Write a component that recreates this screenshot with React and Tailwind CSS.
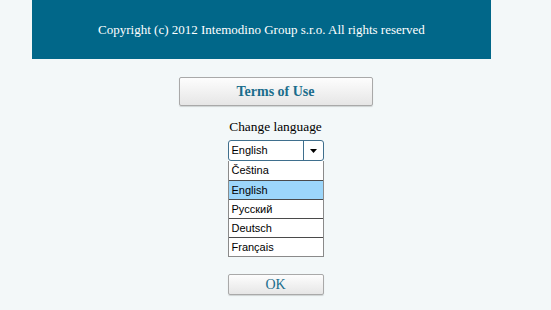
export default function App() {
  const langs = ["Čeština", "English", "Русский", "Deutsch", "Français"];
  return (
    <div className="w-[551px] h-[310px] bg-[#f3f8f9] overflow-hidden flex flex-col items-center">
      <div className="self-start ml-[32px] w-[459px] h-[59px] bg-[#016789] flex items-center justify-center text-white text-[13px] font-['Liberation_Serif',serif]">
        Copyright (c) 2012 Intemodino Group s.r.o. All rights reserved
      </div>
      <button className="mt-[18px] w-[194px] h-[29px] rounded-[2px] border border-[#a9a9a9] bg-gradient-to-b from-[#fdfdfd] to-[#e6e6e6] shadow-[0_1px_1px_rgba(0,0,0,0.15)] text-[#1a6d8c] font-bold text-[14px] font-['Liberation_Serif',serif] flex items-center justify-center">
        Terms of Use
      </button>
      <div className="mt-[12px] h-[17px] leading-[17px] text-[13.4px] text-black font-['Liberation_Serif',serif]">
        Change language
      </div>
      <div className="mt-[5px] w-[96px] font-['Liberation_Sans',sans-serif] text-[11px] text-black">
        <div className="h-[21px] flex border border-[#3f6f8d] rounded-[3px] bg-white">
          <div className="flex-1 pl-[3px] flex items-center">English</div>
          <div className="w-[20px] border-l border-[#3f6f8d] flex items-center justify-center">
            <svg width="7" height="4" viewBox="0 0 7 4"><path d="M0 0h7L3.5 4z" fill="#000" /></svg>
          </div>
        </div>
        <div className="border-x border-b border-[#8a8a8a] bg-white">
          {langs.map((l, i) => (
            <div
              key={l}
              className={`h-[19px] pl-[3px] flex items-center ${i > 0 ? "border-t border-[#4a4a4a]" : ""} ${l === "English" ? "bg-[#9cd6fa]" : "bg-white"}`}
            >
              {l}
            </div>
          ))}
        </div>
      </div>
      <button className="mt-[17px] w-[96px] h-[21px] rounded-[2px] border border-[#a9a9a9] bg-gradient-to-b from-[#fdfdfd] to-[#e6e6e6] shadow-[0_1px_1px_rgba(0,0,0,0.15)] text-[#1a6d8c] text-[14px] font-['Liberation_Serif',serif] flex items-center justify-center">
        OK
      </button>
    </div>
  );
}
